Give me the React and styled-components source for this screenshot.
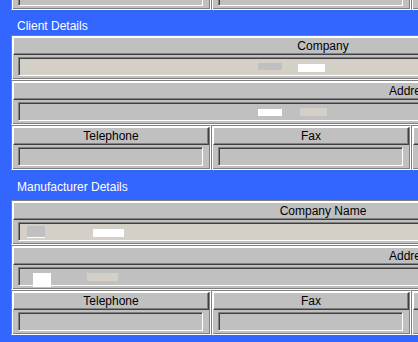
import React from "react";
import styled, { createGlobalStyle } from "styled-components";

const GlobalStyle = createGlobalStyle`
  html, body {
    margin: 0;
    padding: 0;
    overflow: hidden;
    background: #3366ff;
  }
  body {
    font-family: "Liberation Sans", Arial, sans-serif;
    font-size: 12px;
  }
`;

const Page = styled.div`
  min-height: 100vh;
  padding-left: 11px;
  background: #3366ff;
`;

// previous section, scrolled mostly out of view
const Clipped = styled.div`
  margin-top: -35px;
`;

const SectionTitle = styled.div`
  padding: ${(p) => p.$pt}px 0 ${(p) => p.$pb}px 6px;
  line-height: 15px;
  color: #ffffff;
  white-space: nowrap;
`;

const Panel = styled.div`
  display: flex;
  flex-direction: column;
  width: 900px;
`;

const Row = styled.div`
  display: flex;
`;

const Cell = styled.div`
  box-sizing: border-box;
  flex: none;
  width: ${(p) => p.$w}px;
  height: 45px;
  background: #c0c0c0;
  border: 1px solid;
  border-color: #808080 #ffffff #ffffff #808080;
  box-shadow: inset 1px 1px 0 #ffffff, inset -1px -1px 0 #808080;
  padding: 1px;
  display: flex;
  flex-direction: column;
`;

const Header = styled.div`
  box-sizing: border-box;
  height: 18px;
  border-top: 1px solid #ffffff;
  border-left: 1px solid #ffffff;
  border-bottom: 1px solid #404040;
  border-right: 1px solid #404040;
  box-shadow: inset -1px -1px 0 #808080;
  line-height: 16px;
  text-align: center;
  color: #000000;
  white-space: nowrap;
`;

const FieldZone = styled.div`
  padding: 2px 6px 2px 5px;
`;

const Field = styled.div`
  position: relative;
  box-sizing: border-box;
  height: 19px;
  background: ${(p) => (p.$beige ? "#d4d0c8" : "#c0c0c0")};
  border-top: 1px solid #808080;
  border-left: 1px solid #808080;
  border-bottom: 1px solid #ffffff;
  border-right: 1px solid #ffffff;
  box-shadow: inset 1px 1px 0 #404040;
`;

const blotColors = { gray: "#c0c0c0", white: "#ffffff", beige: "#d4d0c8" };

const Blot = styled.span`
  position: absolute;
  left: ${(p) => p.$x}px;
  top: ${(p) => p.$y}px;
  width: ${(p) => p.$w}px;
  height: ${(p) => p.$h}px;
  background: ${(p) => blotColors[p.$c]};
  border-bottom: ${(p) => (p.$line ? "1px solid #ffffff" : "none")};
`;

function FormCell({ label, width, beige, blots = [] }) {
  return (
    <Cell $w={width}>
      <Header>{label}</Header>
      <FieldZone>
        <Field $beige={beige}>
          {blots.map((b, i) => (
            <Blot key={i} $x={b[0]} $y={b[1]} $w={b[2]} $h={b[3]} $c={b[4]} $line={b[5]} />
          ))}
        </Field>
      </FieldZone>
    </Cell>
  );
}

function ContactRow({ labels }) {
  return (
    <Row>
      {labels.map((l, i) => (
        <FormCell key={i} label={l} width={200} />
      ))}
    </Row>
  );
}

function DetailsPanel({ nameLabel, nameBlots, addressBlots }) {
  return (
    <Panel>
      <Row>
        <FormCell label={nameLabel} width={624} beige blots={nameBlots} />
      </Row>
      <Row>
        <FormCell label="Address" width={800} blots={addressBlots} />
      </Row>
      <ContactRow labels={["Telephone", "Fax", "", ""]} />
    </Panel>
  );
}

export default function App() {
  return (
    <Page>
      <GlobalStyle />
      <Clipped>
        <Panel>
          <ContactRow labels={["", "", "", ""]} />
        </Panel>
      </Clipped>
      <SectionTitle $pt={9} $pb={1}>Client Details</SectionTitle>
      <DetailsPanel
        nameLabel="Company"
        nameBlots={[
          [239, 5, 24, 7, "gray"],
          [279, 6, 27, 8, "white"],
        ]}
        addressBlots={[
          [239, 6, 24, 7, "white"],
          [281, 5, 27, 8, "beige"],
        ]}
      />
      <SectionTitle $pt={10} $pb={5}>Manufacturer Details</SectionTitle>
      <DetailsPanel
        nameLabel="Company Name"
        nameBlots={[
          [8, 3, 18, 11, "gray", true],
          [74, 6, 31, 8, "white"],
        ]}
        addressBlots={[
          [14, 5, 18, 14, "white"],
          [68, 5, 31, 8, "beige"],
        ]}
      />
    </Page>
  );
}
